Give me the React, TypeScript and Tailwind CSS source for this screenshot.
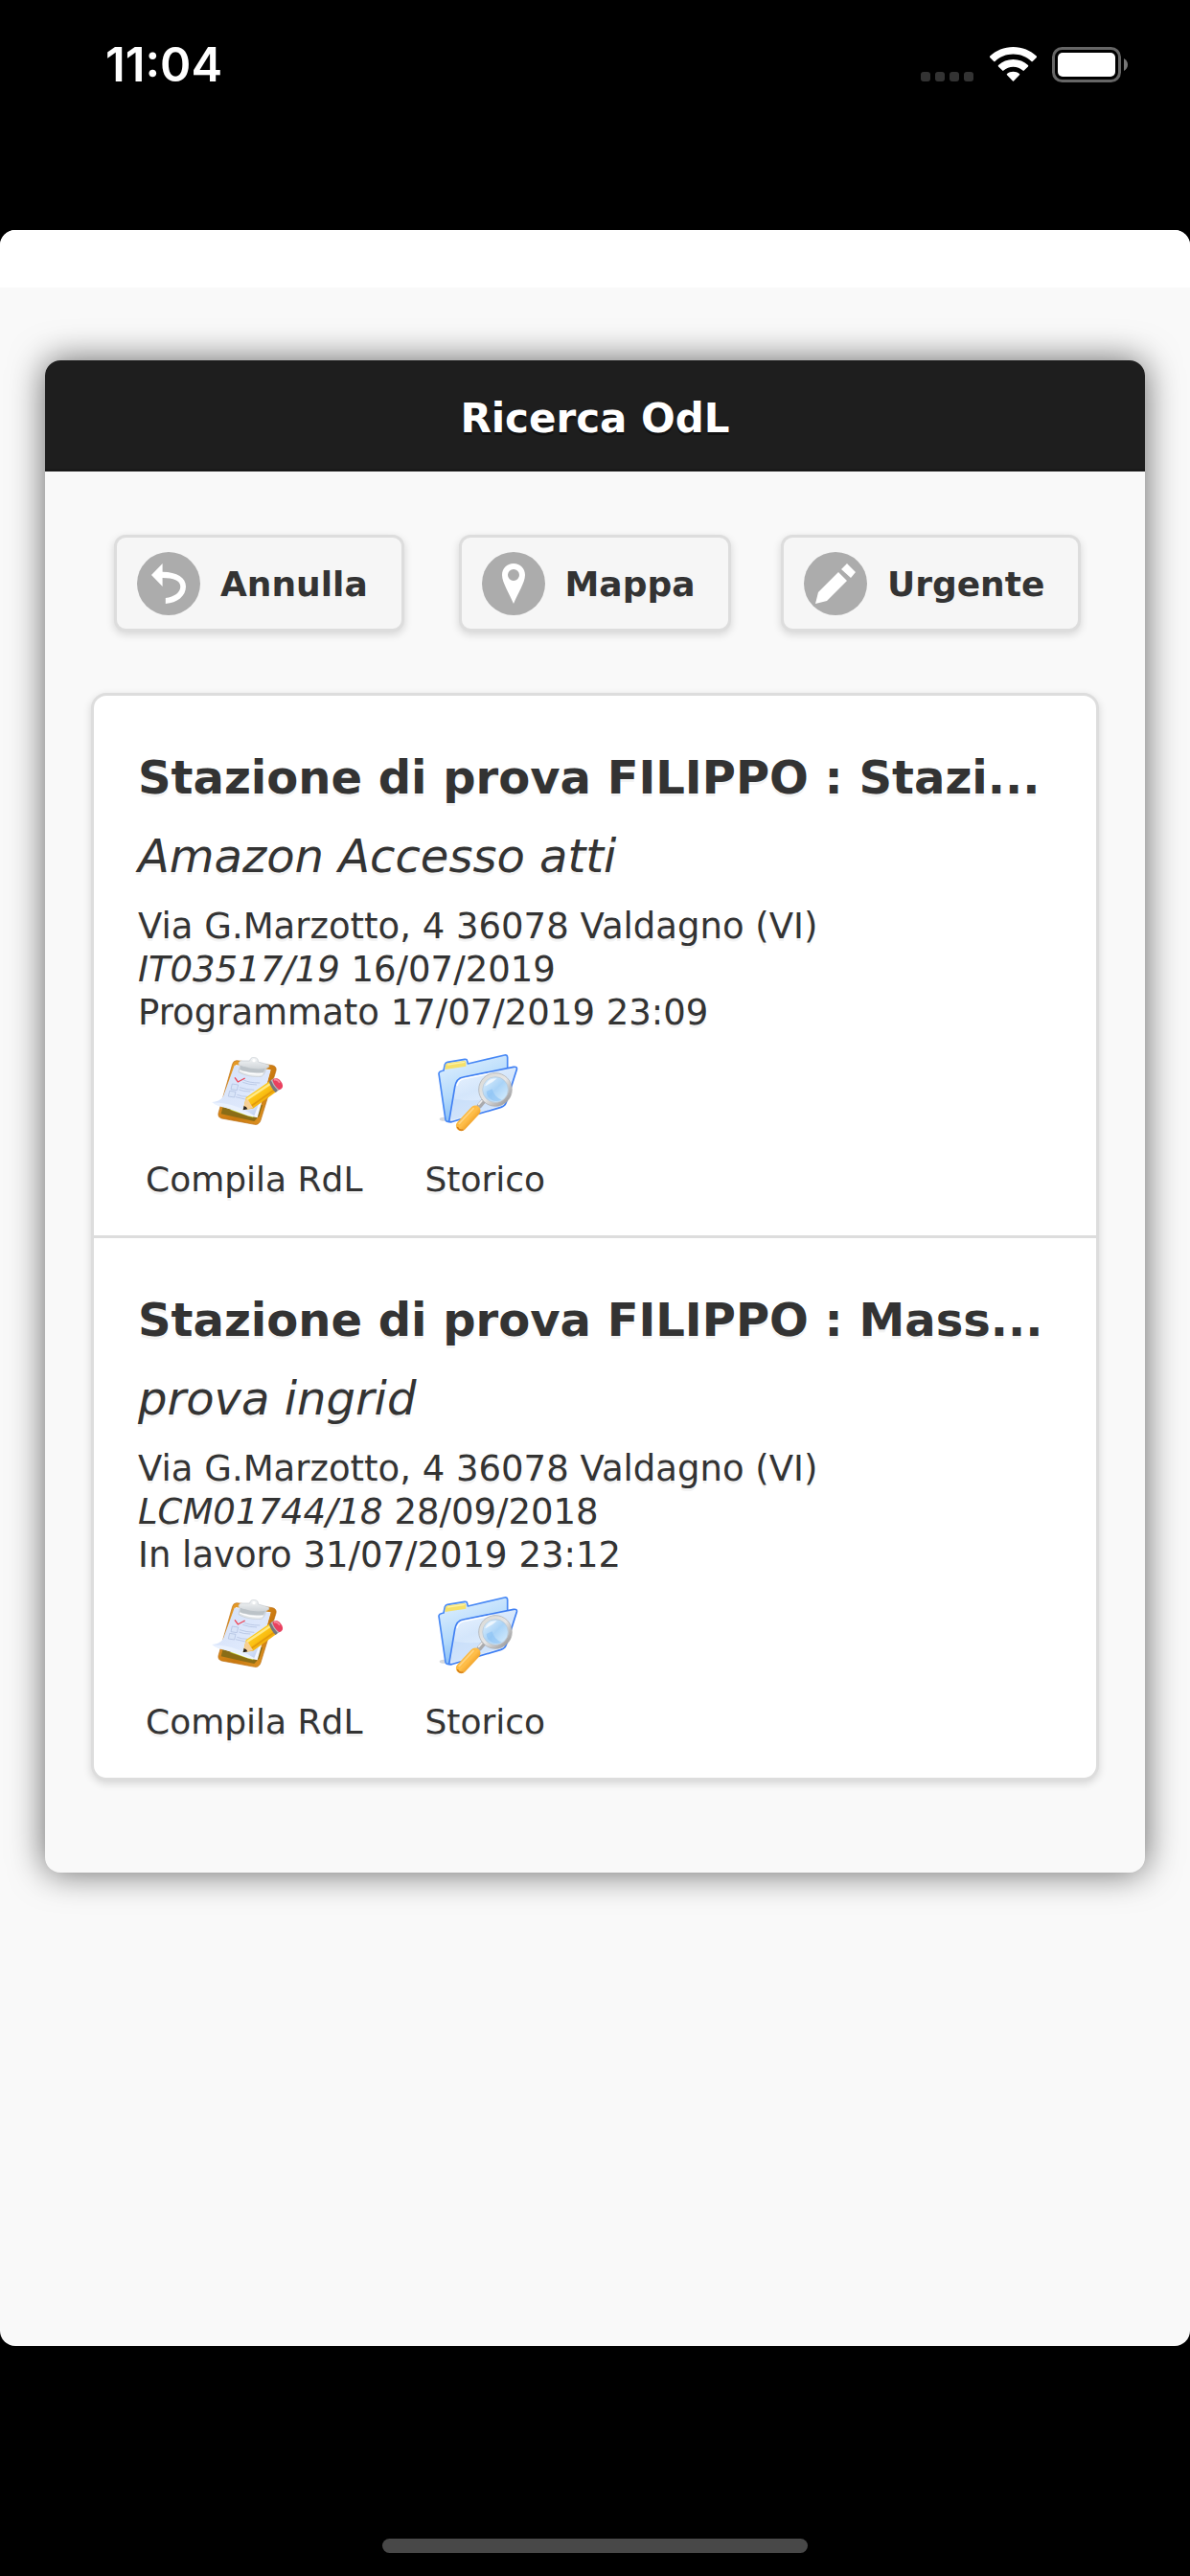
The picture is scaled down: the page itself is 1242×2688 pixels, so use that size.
import type { ReactNode } from "react";

interface Order {
  title: string;
  subject: string;
  address: string;
  code: string;
  date: string;
  state: string;
}

const orders: Order[] = [
  {
    title: "Stazione di prova FILIPPO : Stazi...",
    subject: "Amazon Accesso atti",
    address: "Via G.Marzotto, 4 36078 Valdagno (VI)",
    code: "IT03517/19",
    date: "16/07/2019",
    state: "Programmato 17/07/2019 23:09",
  },
  {
    title: "Stazione di prova FILIPPO : Mass...",
    subject: "prova ingrid",
    address: "Via G.Marzotto, 4 36078 Valdagno (VI)",
    code: "LCM01744/18",
    date: "28/09/2018",
    state: "In lavoro 31/07/2019 23:12",
  },
];

function StatusBar() {
  return (
    <div className="flex h-60 items-start justify-between pl-[110px] pr-[64px] pt-10 text-white">
      <span className="font-['Inter',sans-serif] text-[49px] font-semibold leading-[56px]">11:04</span>
      <svg className="mt-2 h-10 w-[218px]" viewBox="0 0 218 40" aria-hidden="true">
        <g fill="#333">
          <rect x="1" y="27" width="10" height="10" rx="3" />
          <rect x="16" y="27" width="10" height="10" rx="3" />
          <rect x="31" y="27" width="10" height="10" rx="3" />
          <rect x="46" y="27" width="10" height="10" rx="3" />
        </g>
        <g fill="#fff">
          <path d="M97.500 1c9.500 0 18 3.600 24.300 9.600.4.400.4 1 0 1.400l-4 4c-.4.400-1 .4-1.400 0C111.500 11.300 104.800 8.600 97.500 8.600S83.500 11.300 78.600 16c-.4.400-1 .4-1.400 0l-4-4c-.4-.4-.4-1 0-1.400C79.500 4.600 88 1 97.500 1z" />
          <path d="M97.500 14c6 0 11.400 2.300 15.500 6 .4.400.4 1 0 1.400l-4.200 4.200c-.4.400-.9.400-1.300 0-2.700-2.400-6.200-3.900-10-3.900s-7.300 1.500-10 3.900c-.4.400-.9.400-1.300 0L82 21.400c-.4-.4-.4-1 0-1.400 4.100-3.700 9.500-6 15.500-6z" />
          <path d="M97.500 26.700c2.500 0 4.700.9 6.500 2.300.4.400.4.900 0 1.300l-6 6.200c-.3.300-.7.300-1 0l-6-6.200c-.4-.4-.4-.9 0-1.300 1.800-1.400 4-2.300 6.500-2.300z" />
        </g>
        <rect x="139.500" y="2.500" width="69" height="34" rx="9" fill="none" stroke="#666" strokeWidth="3" />
        <rect x="144" y="7" width="60" height="25" rx="5" fill="#fff" />
        <path d="M213 13c2.500 1.200 4 3.700 4 6.500s-1.500 5.300-4 6.500z" fill="#777" />
      </svg>
    </div>
  );
}

function ActionButton({ label, children }: { label: string; children: ReactNode }) {
  return (
    <button
      type="button"
      className="flex items-center gap-[21px] rounded-xl border-3 border-[#ddd] bg-[#f6f6f6] pb-[14px] pl-[21px] pr-[35px] pt-[15px] text-[36px] font-bold leading-[43px] shadow-[0_3px_9px_rgba(0,0,0,0.15)] [text-shadow:0_3px_0_#f3f3f3]"
    >
      <svg className="size-[66px]" viewBox="0 0 66 66" fill="#fff" aria-hidden="true">
        <circle cx="33" cy="33" r="33" fill="#acacac" />
        {children}
      </svg>
      {label}
    </button>
  );
}

function ClipboardIcon() {
  return (
    <svg className="size-[120px]" viewBox="15 0 360 360" aria-hidden="true">
      <defs>
        <linearGradient id="board" x1="0" y1="0" x2="1" y2="1">
          <stop offset="0" stopColor="#efa62f" />
          <stop offset="0.6" stopColor="#c9780f" />
          <stop offset="1" stopColor="#e7a02c" />
        </linearGradient>
        <linearGradient id="sheet" x1="0" y1="0" x2="1" y2="1">
          <stop offset="0" stopColor="#d3e0f8" />
          <stop offset="0.7" stopColor="#dfe9fc" />
          <stop offset="1" stopColor="#a9bfe6" />
        </linearGradient>
        <linearGradient id="clip" x1="0" y1="0" x2="0" y2="1">
          <stop offset="0" stopColor="#f5f7f8" />
          <stop offset="0.6" stopColor="#cfd4d8" />
          <stop offset="1" stopColor="#eef1f3" />
        </linearGradient>
        <linearGradient id="pencil" x1="0" y1="0" x2="1" y2="1">
          <stop offset="0" stopColor="#ffdf4a" />
          <stop offset="0.5" stopColor="#fbc113" />
          <stop offset="1" stopColor="#dd8d06" />
        </linearGradient>
      </defs>
      <path
        d="M141 83 253 98q14 3 11 17L216 270q-5 15-19 13L94 264q-12-3-10-16L128 94q3-11 13-11z"
        fill="url(#board)"
        stroke="#b96d10"
        strokeWidth="2"
      />
      <path d="M98 226 92 250 196 273 212 256 222 222z" fill="#8a6d16" />
      <path d="M120 238 192 262 209 224z" fill="#c0d035" />
      <path d="M138 96 248 112 206 262 176 256 100 228z" fill="#f2f6ff" />
      <path
        d="M134 98 246 114 236 152 196 256C172 240 150 236 126 230 100 228 80 224 64 213 84 212 94 204 100 192z"
        fill="url(#sheet)"
      />
      <path d="M64 213c34 4 78 4 130 43-36-10-62-20-88-25-18-3-32-8-42-18z" fill="#e9f1fe" />
      <g fill="none" stroke="#aabbdc" strokeWidth="2">
        <path d="M127 156l19 3-4 17-19-3zM119 178l19 3-4 17-19-3z" fill="#d8e4f8" />
        <path d="M162 143q16 10 52 10M160 151q20 8 44 8M150 167q20 7 46 8M148 174q14 6 36 6M142 190q14 6 34 6M138 197l30 7" />
      </g>
      <path d="M135 136 145 150 167 138" fill="none" stroke="#ee4456" strokeWidth="4" />
      <path
        d="M154 84h28c2-10 8-11 15-10 7 0 12 4 11 13l30 8q6 2 4 8l-9 5c-3 12-6 20-14 25-28 2-53-3-72-14 2-8 4-14 4-20-6-4-5-12 3-15z"
        fill="url(#clip)"
        stroke="#c2c9ce"
        strokeWidth="2"
      />
      <path d="M153 98q40 16 78 9l-6 13q-44 4-73-9z" fill="#bcc3c8" />
      <path d="M150 114q36 16 73 10" fill="none" stroke="#fff" strokeWidth="4" />
      <circle cx="195" cy="83" r="5" fill="#fff" />
      <path d="M161 237 170 199 244 148 265 181 192 233z" fill="url(#pencil)" />
      <path d="M173 205 246 156" stroke="#ffea86" strokeWidth="7" />
      <path d="M187 225 260 174" stroke="#e39a0b" strokeWidth="5" />
      <path d="M161 237 170 201 179 209 185 220 193 232z" fill="#f6cf96" />
      <path d="M161 238 164 225q9 2 11 10z" fill="#26221f" />
      <path d="M242 149 253 141 274 174 263 183q-13-12-21-34z" fill="#77777b" />
      <path d="M248 145 258 138 280 171 270 177q-14-13-22-32z" fill="#b9bbbd" />
      <path d="M253 143c8-6 17-6 23 1 6 6 11 15 9 22-2 5-6 7-11 9-11-9-18-20-21-32z" fill="#e9415f" />
      <path d="M258 144q10-4 18 8" fill="none" stroke="#f8889a" strokeWidth="5" />
    </svg>
  );
}

function FolderIcon() {
  return (
    <svg className="size-[120px]" viewBox="15 0 360 360" aria-hidden="true">
      <defs>
        <linearGradient id="back" x1="0" y1="0" x2="0.4" y2="1">
          <stop offset="0" stopColor="#e6f3ff" />
          <stop offset="0.6" stopColor="#b4dafb" />
          <stop offset="1" stopColor="#7fb8f3" />
        </linearGradient>
        <linearGradient id="front" x1="0" y1="0" x2="0.5" y2="1">
          <stop offset="0" stopColor="#edf5ff" />
          <stop offset="0.5" stopColor="#d4e6fb" />
          <stop offset="1" stopColor="#eaf3ff" />
        </linearGradient>
        <linearGradient id="lens" x1="0" y1="0" x2="1" y2="1">
          <stop offset="0" stopColor="#eaf5fe" />
          <stop offset="0.5" stopColor="#a9d3f7" />
          <stop offset="1" stopColor="#e3f4ff" />
        </linearGradient>
        <linearGradient id="rim" x1="0" y1="0" x2="1" y2="1">
          <stop offset="0" stopColor="#d9d9d5" />
          <stop offset="0.5" stopColor="#e6e6e6" />
          <stop offset="1" stopColor="#8f8f91" />
        </linearGradient>
        <linearGradient id="handle" x1="0" y1="0" x2="1" y2="1">
          <stop offset="0" stopColor="#f7b033" />
          <stop offset="0.5" stopColor="#ffbf4a" />
          <stop offset="1" stopColor="#e88f14" />
        </linearGradient>
      </defs>
      <ellipse cx="68" cy="266" rx="15" ry="6" fill="#d5d8dd" />
      <path
        d="M66 114 70 95q2-6 8-7l54-9q7-1 8 5l2 9 115-27q8-2 9 7v36L92 274q-18 3-20-5L51 124q0-7 15-10z"
        fill="url(#back)"
        stroke="#4788f5"
        strokeWidth="5"
        strokeLinejoin="round"
      />
      <path d="M72 97q2-5 8-6l50-7q6 0 6 5v12l-66 10z" fill="#f5e06b" />
      <path d="M78 96l54-8" stroke="#fdf2a4" strokeWidth="4" />
      <path
        d="M83 274 101 166q5-28 26-31l158-32q12-2 10 8l-33 103q-4 12-16 15L98 273q-9 3-15 1z"
        fill="url(#front)"
        stroke="#3f7ff3"
        strokeWidth="5"
        strokeLinejoin="round"
      />
      <path d="M100 203q60 10 92 0l58 20-154 45-8-2z" fill="#bcd8f8" opacity="0.45" />
      <path d="M108 162q5-20 22-22l90-18" fill="none" stroke="#fff" strokeWidth="4" />
      <path d="M178 225 190 211" stroke="#aaaaac" strokeWidth="16" strokeLinecap="round" />
      <path d="M176 220 186 209" stroke="#ededed" strokeWidth="5" strokeLinecap="round" />
      <circle cx="228" cy="174" r="46" fill="url(#lens)" stroke="url(#rim)" strokeWidth="11" />
      <circle cx="228" cy="174" r="52" fill="none" stroke="#a8a8a8" strokeWidth="2" />
      <circle cx="228" cy="174" r="40" fill="none" stroke="#b9c5d0" strokeWidth="2" />
      <path d="M200 180a32 32 0 0 0 48 26q-24-8-30-34z" fill="#7fbcf3" opacity="0.5" />
      <path d="M195 163q9-25 38-24-16 16-38 24z" fill="#fff" opacity="0.7" />
      <path d="M121 287 165 240" stroke="url(#handle)" strokeWidth="33" strokeLinecap="round" />
      <path d="M115 280 159 233" stroke="#ffd27c" strokeWidth="6" strokeLinecap="round" />
      <path d="M109 291q5 12 18 9" fill="none" stroke="#d07a17" strokeWidth="4" />
    </svg>
  );
}

function OrderItem({ order }: { order: Order }) {
  return (
    <li className="px-[46px] pb-9 pt-[55px]">
      <h2 className="truncate text-[48px] font-bold leading-[60px]">{order.title}</h2>
      <p className="mt-[22px] text-[48px] italic leading-[60px]">{order.subject}</p>
      <div className="mt-[21px] text-[37px]">
        <p>{order.address}</p>
        <p>
          <em>{order.code}</em> {order.date}
        </p>
        <p>{order.state}</p>
      </div>
      <div className="flex gap-[65px] pl-2">
        <a href="#compila" className="flex flex-col items-center gap-[9px]">
          <ClipboardIcon />
          Compila RdL
        </a>
        <a href="#storico" className="flex flex-col items-center gap-[9px]">
          <FolderIcon />
          Storico
        </a>
      </div>
    </li>
  );
}

export default function App() {
  return (
    <div className="flex min-h-screen flex-col bg-black font-['DejaVu_Sans',Verdana,sans-serif] text-[36px] leading-[45px] text-[#333]">
      <StatusBar />

      <main className="flex-1 overflow-hidden rounded-2xl bg-[#f9f9f9]">
        <div className="h-15 bg-white" />
        <section className="mx-[47px] mt-[76px] rounded-2xl bg-[#f9f9f9] shadow-[0_0_36px_rgba(0,0,0,0.6)]">
          <header className="rounded-t-2xl border-b-3 border-[#1a1a1a] bg-[#1e1e1e] pb-[26px] pt-[34px]">
            <h1 className="text-center text-[42px] font-bold leading-[53px] text-white [text-shadow:0_3px_0_#111]">
              Ricerca OdL
            </h1>
          </header>

          <div className="px-12 pb-24 pt-[66px]">
            <div className="grid grid-cols-3 justify-items-center">
              <ActionButton label="Annulla">
                <path d="M26.600 12v8.700C42 20.700 51 27 51 36c0 10-9 17-21.200 18v-6C39 47 45.300 42 45.300 36c0-6-7-9-18.700-9v9L15 24z" />
              </ActionButton>
              <ActionButton label="Mappa">
                <path
                  fillRule="evenodd"
                  d="M33 12c-7 0-12 5-12 12 0 8 8 20 12 30 4-10 12-22 12-30 0-7-5-12-12-12zm0 6a6 6 0 1 1 0 12 6 6 0 0 1 0-12z"
                />
              </ActionButton>
              <ActionButton label="Urgente">
                <path d="M45 12 54 21 49 27 39 18zM36 21 45 30 24 51 12 54 15 42z" />
              </ActionButton>
            </div>

            <ul className="mt-16 divide-y-3 divide-[#ddd] rounded-2xl border-3 border-[#ddd] bg-white shadow-[0_3px_9px_rgba(0,0,0,0.15)] [text-shadow:0_3px_0_#f3f3f3]">
              {orders.map((o) => (
                <OrderItem key={o.code} order={o} />
              ))}
            </ul>
          </div>
        </section>
      </main>

      <footer className="flex h-60 items-end justify-center pb-6">
        <div className="h-[15px] w-[444px] rounded-full bg-[#484848]" />
      </footer>
    </div>
  );
}
